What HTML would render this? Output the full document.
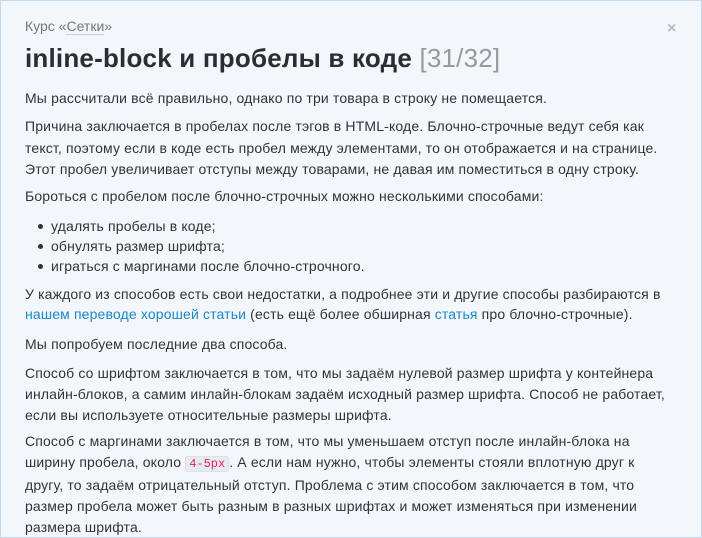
<!DOCTYPE html>
<html><head><meta charset="utf-8"><style>
html,body{margin:0;padding:0;}
body{width:702px;height:538px;overflow:hidden;background:#f3f6fb;font-family:"Liberation Sans",sans-serif;color:#333;position:relative}
.frame{position:absolute;left:0;top:0;width:700px;height:536px;border:1px solid #c5d8ef;}
.t{position:absolute;left:25px;white-space:nowrap;font-size:14px;letter-spacing:0.15px;line-height:20px}
a{color:#1c87c9;text-decoration:none}
code{font-family:"Liberation Mono",monospace;font-size:12px;color:#e0245e;background:#e8ecf1;border:1px solid #dde2e8;border-radius:3px;padding:0 3px;letter-spacing:0}
.li{position:absolute;left:38px;white-space:nowrap;font-size:14px;letter-spacing:0.15px;line-height:20px}
.li:before{content:"";position:absolute;left:0;top:8px;width:5px;height:5px;border-radius:50%;background:#333}
.li span{margin-left:13px}
</style></head><body><div class="frame"></div>
<div class="t" style="top:16px;font-size:14px;color:#777;letter-spacing:0">Курс «<span style="border-bottom:1px solid #c9ced6">Сетки</span>»</div>
<div style="position:absolute;left:667px;top:20px;font-size:16px;color:#bbb;font-weight:bold">×</div>
<div class="t" style="top:42px;font-size:26px;line-height:32px;font-weight:bold;color:#2b2d33;letter-spacing:0.2px">inline-block и пробелы в коде <span style="font-weight:normal;color:#999">[31/32]</span></div>
<div class="t" style="top:88px">Мы рассчитали всё правильно, однако по три товара в строку не помещается.</div>
<div class="t" style="top:116px;line-height:21.5px">Причина заключается в пробелах после тэгов в HTML-коде. Блочно-строчные ведут себя как<br>текст, поэтому если в коде есть пробел между элементами, то он отображается и на странице.<br>Этот пробел увеличивает отступы между товарами, не давая им поместиться в одну строку.</div>
<div class="t" style="top:186px">Бороться с пробелом после блочно-строчных можно несколькими способами:</div>
<div class="li" style="top:216px"><span>удалять пробелы в коде;</span></div>
<div class="li" style="top:236px"><span>обнулять размер шрифта;</span></div>
<div class="li" style="top:256px"><span>играться с маргинами после блочно-строчного.</span></div>
<div class="t" style="top:285px;line-height:19.5px">У каждого из способов есть свои недостатки, а подробнее эти и другие способы разбираются в<br><a>нашем переводе хорошей статьи</a> (есть ещё более обширная <a>статья</a> про блочно-строчные).</div>
<div class="t" style="top:334px">Мы попробуем последние два способа.</div>
<div class="t" style="top:363px;line-height:21px">Способ со шрифтом заключается в том, что мы задаём нулевой размер шрифта у контейнера<br>инлайн-блоков, а самим инлайн-блокам задаём исходный размер шрифта. Способ не работает,<br>если вы используете относительные размеры шрифта.</div>
<div class="t" style="top:431px;line-height:21px">Способ с маргинами заключается в том, что мы уменьшаем отступ после инлайн-блока на<br>ширину пробела, около <code>4-5px</code>. А если нам нужно, чтобы элементы стояли вплотную друг к<br>другу, то задаём отрицательный отступ. Проблема с этим способом заключается в том, что<br>размер пробела может быть разным в разных шрифтах и может изменяться при изменении<br>размера шрифта.</div>
</body></html>
